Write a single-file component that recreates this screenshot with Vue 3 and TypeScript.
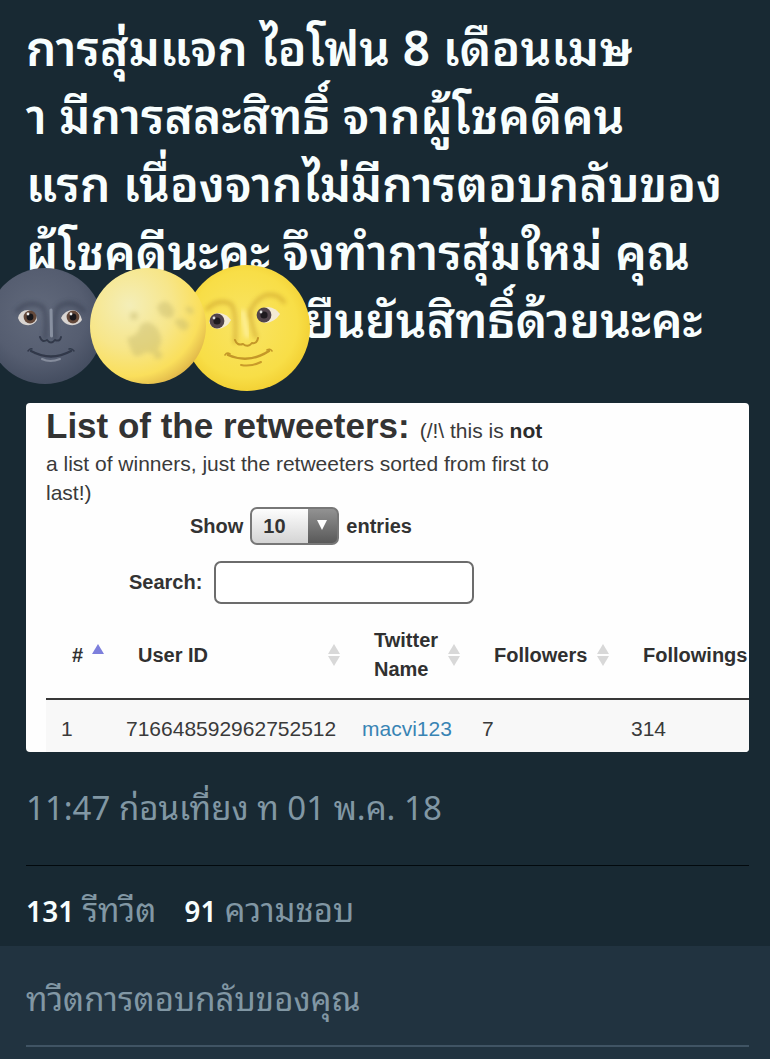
<script setup lang="ts">
import { ref } from 'vue'

interface Column {
  label: string
  sort: 'asc' | 'both' | 'none'
  key: string
}

const tweetLines: string[] = [
  'การสุ่มแจก ไอโฟน 8 เดือนเมษ',
  'า มีการสละสิทธิ์ จากผู้โชคดีคน',
  'แรก เนื่องจากไม่มีการตอบกลับของ',
  'ผู้โชคดีนะคะ จึงทำการสุ่มใหม่ คุณ',
]

const columns: Column[] = [
  { key: 'rank', label: '#', sort: 'asc' },
  { key: 'id', label: 'User ID', sort: 'both' },
  { key: 'name', label: 'Twitter Name', sort: 'both' },
  { key: 'followers', label: 'Followers', sort: 'both' },
  { key: 'followings', label: 'Followings', sort: 'none' },
]

const pageSize = ref('10')
const search = ref('')
const reply = ref('')
</script>

<template>
  <main class="tweet">
    <section class="body">
      <p class="text">
        <span v-for="line in tweetLines" :key="line" class="line">{{ line }}</span>
        <span class="line last">ยืนยันสิทธิ์ด้วยนะคะ</span>
      </p>
      <svg class="moons" viewBox="0 0 320 132" width="320" height="132" aria-hidden="true">
        <defs>
          <radialGradient id="dark" cx="45%" cy="40%" r="62%">
            <stop offset="0" stop-color="#626a7c" />
            <stop offset=".65" stop-color="#555d70" />
            <stop offset="1" stop-color="#434c5f" />
          </radialGradient>
          <radialGradient id="full" cx="34%" cy="32%" r="75%">
            <stop offset="0" stop-color="#f4eeb8" />
            <stop offset=".5" stop-color="#f7e68a" />
            <stop offset=".82" stop-color="#fadf5c" />
            <stop offset="1" stop-color="#dfb548" />
          </radialGradient>
          <radialGradient id="bright" cx="48%" cy="47%" r="56%">
            <stop offset="0" stop-color="#f9e465" />
            <stop offset=".75" stop-color="#f8de47" />
            <stop offset=".94" stop-color="#f3d236" />
            <stop offset="1" stop-color="#dcb032" />
          </radialGradient>
          <filter id="soft" x="-30%" y="-30%" width="160%" height="160%">
            <feGaussianBlur stdDeviation="2" />
          </filter>
          <filter id="fine" x="-30%" y="-30%" width="160%" height="160%">
            <feGaussianBlur stdDeviation="0.6" />
          </filter>
        </defs>

        <g>
          <circle cx="45" cy="62" r="58" fill="url(#dark)" />
          <g fill="none" stroke="#30394a" stroke-linecap="round">
            <g filter="url(#soft)" opacity=".5" stroke-width="4">
              <path d="M17 47Q28 35 43 43Q48 53 45 74" />
              <path d="M58 43Q72 34 84 47" />
              <path d="M57 45Q53 57 55 74" />
            </g>
            <g filter="url(#fine)">
              <path d="M40 73Q42 79 47 76Q51 81 55 76Q60 78 61 73" stroke-width="2" />
              <path d="M31 87Q51 98 71 87" stroke-width="2.4" />
              <path d="M28 87Q30 84 32 85M69 85Q72 84 74 87" stroke-width="1.5" />
            </g>
            <path d="M51 46L51.5 72" stroke="#8890a0" stroke-width="3" />
            <path d="M42 95Q50 99 60 95" stroke="#858c9c" stroke-width="2" filter="url(#fine)" />
          </g>
          <path d="M18 54Q20 46 28 46Q36 47 37 56Q34 62 26 61Q20 60 18 54Z" fill="#d9d5d2" />
          <path d="M61 54Q65 46 73 46Q80 47 82 56Q78 62 70 61Q64 60 61 54Z" fill="#d9d5d2" />
          <circle cx="30" cy="53" r="6.4" fill="#63483a" />
          <circle cx="73" cy="53" r="6.4" fill="#63483a" />
          <circle cx="30" cy="53" r="3.4" fill="#17161a" />
          <circle cx="73" cy="53" r="3.4" fill="#17161a" />
          <circle cx="28" cy="50" r="1.4" fill="#eee" />
          <circle cx="71" cy="50" r="1.4" fill="#eee" />
        </g>

        <g>
          <circle cx="247" cy="64" r="63" fill="url(#bright)" />
          <g fill="none" stroke="#bb8b20" stroke-linecap="round">
            <g filter="url(#soft)" opacity=".45" stroke-width="4">
              <path d="M207 45Q218 34 231 40Q237 48 235 78" />
              <path d="M249 52Q252 37 266 31Q278 29 284 38" />
              <path d="M250 46Q251 60 256 73" />
            </g>
            <g filter="url(#fine)" opacity=".85">
              <path d="M235 76Q237 82 243 80Q248 84 252 79Q257 80 258 74" stroke-width="2" />
              <path d="M228 91Q249 100 269 87" stroke-width="2.4" />
              <path d="M225 91Q227 88 230 90M267 86Q270 84 272 87" stroke-width="1.6" />
            </g>
            <path d="M243 48L247 72" stroke="#fff2a0" stroke-width="4" filter="url(#soft)" />
            <path d="M241 101Q251 103 261 98" stroke="#c99b29" stroke-width="2" filter="url(#fine)" />
          </g>
          <path d="M209 58Q211 49 219 49Q227 50 231 56Q227 64 218 65Q211 64 209 58Z" fill="#f3ead3" />
          <path d="M257 52Q260 44 268 43Q276 44 280 50Q275 58 266 59Q259 58 257 52Z" fill="#f3ead3" />
          <circle cx="217" cy="57" r="7.4" fill="#51444b" />
          <circle cx="264" cy="51" r="7.4" fill="#51444b" />
          <circle cx="217" cy="57" r="3.6" fill="#1e1a1e" />
          <circle cx="264" cy="51" r="3.6" fill="#1e1a1e" />
          <circle cx="214" cy="54" r="1.4" fill="#ddd" />
          <circle cx="261" cy="48" r="1.4" fill="#ddd" />
        </g>

        <g>
          <circle cx="148" cy="62" r="58" fill="url(#full)" />
          <g fill="#c2b66c" opacity=".42" filter="url(#soft)">
            <path d="M127 74Q139 71 140 62Q147 54 156 63Q165 74 159 84Q155 93 147 88L139 92Q134 94 131 86Z" />
            <path d="M157 43Q163 34 170 40Q178 48 171 54Q160 55 157 43Z" />
            <path d="M174 57Q184 51 189 61Q187 69 180 65Z" />
            <path d="M185 44Q192 40 194 48Q190 54 185 44Z" />
            <circle cx="134" cy="52" r="4" />
            <circle cx="158" cy="91" r="4" />
          </g>
        </g>
      </svg>
    </section>

    <section class="card">
      <div class="sheet">
        <header class="intro">
          <div class="title">
            <h1>List of the retweeters:</h1>
            <span>(/!\ this is <b>not</b></span>
          </div>
          <p>a list of winners, just the retweeters sorted from first to last!)</p>
        </header>

        <div class="control length">
          <label for="size">Show</label>
          <span class="select">
            <select id="size" v-model="pageSize">
              <option>10</option>
              <option>25</option>
              <option>50</option>
            </select>
            <svg viewBox="0 0 12 10" width="12" height="10" aria-hidden="true"><path d="M1 0H11L6 10Z" fill="#fff" /></svg>
          </span>
          <span>entries</span>
        </div>

        <div class="control filter">
          <label for="search">Search:</label>
          <input id="search" v-model="search" type="search" />
        </div>

        <table>
          <colgroup>
            <col v-for="c in columns" :key="c.key" :class="'col-' + c.key" />
          </colgroup>
          <thead>
            <tr>
              <th v-for="c in columns" :key="c.key" scope="col">
                <div class="head">
                  <span>{{ c.label }}</span>
                  <svg v-if="c.sort !== 'none'" viewBox="0 0 12 22" width="12" height="22" aria-hidden="true">
                    <path d="M0 10L6 0L12 10Z" :fill="c.sort === 'asc' ? '#7d7fdc' : '#d8d8d8'" />
                    <path v-if="c.sort === 'both'" d="M0 12H12L6 22Z" fill="#d8d8d8" />
                  </svg>
                </div>
              </th>
            </tr>
          </thead>
          <tbody>
            <tr>
              <td>1</td>
              <td>716648592962752512</td>
              <td><a href="#macvi123">macvi123</a></td>
              <td>7</td>
              <td>314</td>
            </tr>
          </tbody>
        </table>
      </div>
    </section>

    <time class="stamp">11:47 ก่อนเที่ยง ท 01 พ.ค. 18</time>

    <div class="stats">
      <span class="stat"><strong>131</strong><span>รีทวีต</span></span>
      <span class="stat"><strong>91</strong><span>ความชอบ</span></span>
    </div>

    <form class="reply" @submit.prevent>
      <input v-model="reply" type="text" placeholder="ทวีตการตอบกลับของคุณ" aria-label="ทวีตการตอบกลับของคุณ" />
    </form>
  </main>
</template>

<style>
body {
  margin: 0;
  background: #182933;
}
</style>

<style scoped>
.tweet {
  display: flex;
  flex-direction: column;
  min-height: 100vh;
  box-sizing: border-box;
  overflow: hidden;
  background: #182933;
  color: #8197a4;
  font-family: "Noto Sans Thai Looped", "Noto Sans Thai", "Noto Sans", "Liberation Sans", sans-serif;
}
.body {
  position: relative;
  padding: 11px 26px 0;
}
.text {
  margin: 0;
  color: #f8fefe;
  font-size: 48px;
  font-weight: 600;
  line-height: 68px;
}
.line {
  display: block;
  white-space: nowrap;
}
.last {
  padding-left: 278px;
}
.moons {
  position: absolute;
  left: 0;
  top: 264px;
}
.card {
  height: 349px;
  margin: 52px 21px 0 26px;
  overflow: hidden;
  border-radius: 4px;
  background: #fefefe;
  color: #3a3a3a;
  font-family: "Liberation Sans", Arial, sans-serif;
  font-size: 20px;
  line-height: 29px;
}
.sheet {
  padding: 0 0 0 20px;
}
.intro {
  max-width: 520px;
  font-size: 21px;
}
.title {
  display: flex;
  align-items: baseline;
  gap: 10px;
  white-space: nowrap;
}
h1 {
  margin: 0;
  color: #333;
  font-size: 35px;
  line-height: 46px;
}
.intro p {
  margin: 0;
}
.intro b {
  color: #2c2c2c;
}
.control {
  display: flex;
  align-items: center;
  gap: 7px;
  color: #333;
  font-weight: bold;
}
.length {
  margin: 0 0 0 144px;
}
.select {
  position: relative;
}
.select svg {
  position: absolute;
  right: 11px;
  top: 13px;
  pointer-events: none;
}
select {
  display: block;
  appearance: none;
  width: 89px;
  height: 38px;
  padding: 0 0 0 11px;
  border: 2px solid #777;
  border-radius: 7px;
  background: linear-gradient(#929292, #595959) right / 29px 100% no-repeat, linear-gradient(#fdfdfd, #d4d4d4);
  color: #333;
  font: bold 20px "Liberation Sans", Arial, sans-serif;
}
.filter {
  gap: 12px;
  margin: 16px 0 0 83px;
}
.filter input {
  box-sizing: border-box;
  width: 260px;
  height: 43px;
  padding: 0 10px;
  border: 2px solid #6c6c6c;
  border-radius: 7px;
  background: #fff;
  font: 20px "Liberation Sans", Arial, sans-serif;
}
table {
  width: 770px;
  margin-top: 12px;
  border-collapse: collapse;
  table-layout: fixed;
}
.col-rank { width: 68px; }
.col-id { width: 234px; }
.col-name { width: 120px; }
.col-followers { width: 149px; }
th {
  padding: 10px 14px 14px 26px;
  border-bottom: 2px solid #383838;
  color: #303030;
  text-align: left;
}
.head {
  display: flex;
  align-items: center;
  justify-content: space-between;
  gap: 6px;
  height: 58px;
}
.head svg {
  flex: none;
}
th:nth-child(1) { padding-right: 10px; }
th:nth-child(2) { padding: 10px 8px 14px 24px; }
th:nth-child(3) { padding-right: 8px; }
th:nth-child(4) { padding-right: 8px; }
td {
  height: 56px;
  padding: 0 0 0 14px;
  background: #f8f8f8;
  font-size: 21px;
}
td:first-child { padding-left: 15px; }
td:nth-child(2) { padding-left: 12px; }
td a {
  color: #3884b4;
  text-decoration: none;
}
.stamp {
  margin: 30px 21px 0 26px;
  padding-bottom: 35px;
  border-bottom: 1px solid #02090d;
  font-size: 33px;
  line-height: 48px;
}
.stats {
  display: flex;
  gap: 28px;
  padding: 18px 26px 12px;
  font-size: 33px;
  line-height: 48px;
}
.stat {
  display: flex;
  align-items: baseline;
  gap: 8px;
}
.stats strong {
  color: #f8fefe;
  font-size: 28px;
  font-weight: 600;
}
.reply {
  flex: 1;
  padding: 20px 21px 12px 26px;
  background: #213340;
}
.reply input {
  display: block;
  box-sizing: border-box;
  width: 100%;
  height: 81px;
  padding: 0 0 18px;
  border: 0;
  border-bottom: 2px solid #405464;
  outline: 0;
  background: none;
  color: #f8fefe;
  font-family: inherit;
  font-size: 33px;
}
.reply input::placeholder {
  color: #8197a4;
  opacity: 1;
}
</style>
